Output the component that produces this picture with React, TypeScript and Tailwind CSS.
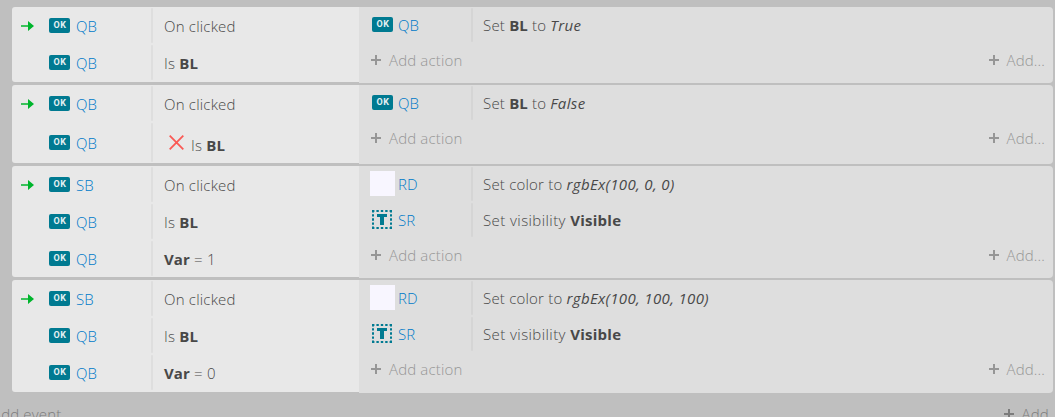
import type { ReactNode } from "react";
import clsx from "clsx";

type ObjectIcon = "button" | "sprite" | "text";

interface Condition {
  object: string;
  text: ReactNode;
  trigger?: boolean;
  inverted?: boolean;
}

interface Action {
  icon: ObjectIcon;
  object: string;
  text: ReactNode;
}

interface EventBlock {
  conditions: Condition[];
  actions: Action[];
  height: string;
}

function Strong({ children }: { children: ReactNode }) {
  return <b className="font-bold tracking-[0.1px]">{children}</b>;
}

function Expr({ children }: { children: ReactNode }) {
  return <i className="font-normal tracking-[0.35px]">{children}</i>;
}

const setVisible = (
  <span className="tracking-[0.42px]">
    Set visibility <b className="font-bold tracking-[0.25px]">Visible</b>
  </span>
);

const events: EventBlock[] = [
  {
    height: "h-[76px]",
    conditions: [
      { object: "QB", text: "On clicked", trigger: true },
      { object: "QB", text: <>Is <Strong>BL</Strong></> },
    ],
    actions: [
      { icon: "button", object: "QB", text: <>Set <Strong>BL</Strong> to <Expr>True</Expr></> },
    ],
  },
  {
    height: "h-[79px]",
    conditions: [
      { object: "QB", text: "On clicked", trigger: true },
      { object: "QB", text: <>Is <Strong>BL</Strong></>, inverted: true },
    ],
    actions: [
      { icon: "button", object: "QB", text: <>Set <Strong>BL</Strong> to <Expr>False</Expr></> },
    ],
  },
  {
    height: "h-[112px]",
    conditions: [
      { object: "SB", text: "On clicked", trigger: true },
      { object: "QB", text: <>Is <Strong>BL</Strong></> },
      { object: "QB", text: <><Strong>Var</Strong> = 1</> },
    ],
    actions: [
      { icon: "sprite", object: "RD", text: <>Set color to <Expr>rgbEx(100, 0, 0)</Expr></> },
      { icon: "text", object: "SR", text: setVisible },
    ],
  },
  {
    height: "h-[113px]",
    conditions: [
      { object: "SB", text: "On clicked", trigger: true },
      { object: "QB", text: <>Is <Strong>BL</Strong></> },
      { object: "QB", text: <><Strong>Var</Strong> = 0</> },
    ],
    actions: [
      { icon: "sprite", object: "RD", text: <>Set color to <Expr>rgbEx(100, 100, 100)</Expr></> },
      { icon: "text", object: "SR", text: setVisible },
    ],
  },
];

function ButtonIcon() {
  return (
    <span className="flex h-[15px] w-[21px] items-center justify-center rounded-[2px] bg-[#007a91] pl-px font-['Roboto',sans-serif] text-[9px] leading-[15px] font-bold tracking-[0.6px] text-[#e4f1f3]">
      OK
    </span>
  );
}

function TextIcon() {
  return (
    <svg width="20" height="19" viewBox="0 0 20 19" fill="none" stroke="#007a91">
      <path d="M0 1H20M0 18H20" strokeWidth="2" strokeDasharray="2.4 2" />
      <path d="M1 0V19M19 0V19" strokeWidth="2" strokeDasharray="2.4 1.75" />
      <path d="M5 5.5H15" strokeWidth="3" />
      <path d="M10 5V15" strokeWidth="4" />
    </svg>
  );
}

function TriggerArrow() {
  return (
    <svg width="13" height="10" viewBox="0 0 13 10">
      <path d="M0 4.2H7V0L13 5L7 10V5.8H0Z" fill="#00b52d" />
    </svg>
  );
}

function InvertedIcon() {
  return (
    <svg width="15" height="15" viewBox="0 0 15 15" stroke="#fa5a55" strokeWidth="1.8">
      <path d="M0.7 0.7L14.3 14.3M14.3 0.7L0.7 14.3" />
    </svg>
  );
}

function Plus() {
  return (
    <svg width="10" height="10" viewBox="0 0 10 10" stroke="currentColor" strokeWidth="2">
      <path d="M0 5H10M5 0V10" />
    </svg>
  );
}

function ConditionRow({ object, text, trigger, inverted }: Condition) {
  return (
    <div className={clsx("flex", inverted ? "h-[41px]" : "h-[37px]")}>
      <div className="flex w-[37px] items-center pt-px pl-[9px]">
        {trigger && <TriggerArrow />}
      </div>
      <div className="flex w-[102px] items-center gap-1.5">
        <ButtonIcon />
        <span className="pt-px tracking-normal text-[#007ac8]">{object}</span>
      </div>
      <div className="my-px w-0.5 rounded-full bg-[#dedede]" />
      <div className="flex flex-1 items-center pl-[11px]">
        {inverted && (
          <span className="mr-[7px] ml-[5px]">
            <InvertedIcon />
          </span>
        )}
        <span className={inverted ? "pt-[5px]" : "pt-px"}>{text}</span>
      </div>
    </div>
  );
}

function ActionRow({ icon, object, text }: Action) {
  return (
    <div className="flex h-9">
      <div className="flex w-[39px] items-center pl-[11px]">
        {icon === "button" && <span className="mb-px ml-0.5"><ButtonIcon /></span>}
        {icon === "sprite" && <span className="mb-0.5 size-[25px] bg-[#f8f6ff]" />}
        {icon === "text" && <span className="mb-px ml-0.5"><TextIcon /></span>}
      </div>
      <div className="flex w-[73px] items-center tracking-normal text-[#007ac8]">{object}</div>
      <div className="my-px w-0.5 rounded-full bg-[#d5d5d5]" />
      <div className="flex items-center pl-[10px]">{text}</div>
    </div>
  );
}

function AddLink({ label }: { label: string }) {
  return (
    <span className="flex items-center gap-2 tracking-[0.15px]">
      <Plus />
      <span>{label}</span>
    </span>
  );
}

function EventRow({ conditions, actions, height }: EventBlock) {
  return (
    <div className={clsx("flex", height)}>
      <div className="mb-px w-[347px] rounded-l-[3px] bg-[#e8e8e8]">
        {conditions.map((condition, i) => (
          <ConditionRow key={i} {...condition} />
        ))}
      </div>
      <div className="w-[694px] rounded-r-[4px] bg-[#dedede]">
        {actions.map((action, i) => (
          <ActionRow key={i} {...action} />
        ))}
        <div className="flex h-[34px] items-center justify-between pr-2 pl-3 text-[#969696]">
          <AddLink label="Add action" />
          <AddLink label="Add..." />
        </div>
      </div>
    </div>
  );
}

export default function App() {
  return (
    <div className="h-[417px] w-[1055px] overflow-hidden bg-[#bfbfbf] pt-[7px] font-['Open_Sans',sans-serif] text-[15px] leading-5 font-light tracking-[0.2px] whitespace-pre text-[#484848]">
      <div className="flex flex-col gap-0.5 pl-3">
        {events.map((event, i) => (
          <EventRow key={i} {...event} />
        ))}
      </div>
      <div className="mt-[11px] -mr-[5px] -ml-[26px] flex justify-between text-[#7c7c7c]">
        <AddLink label="Add event" />
        <AddLink label="Add..." />
      </div>
    </div>
  );
}
